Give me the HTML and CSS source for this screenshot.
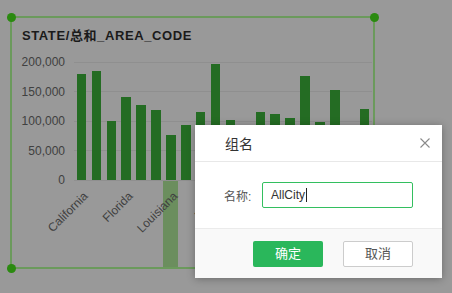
FILE: index.html
```html
<!DOCTYPE html>
<html>
<head>
    <title>Group Name</title>
    <meta charset="utf-8">
    <link rel="stylesheet" href="styles.css">
</head>
<body>
<div class="widget">
    <span class="handle tl"></span>
    <span class="handle tr"></span>
    <span class="handle bl"></span>
    <span class="handle br"></span>

    <div class="title">STATE/总和_AREA_CODE</div>

    <div class="chart">
        <div class="yaxis">
            <span>200,000</span>
            <span>150,000</span>
            <span>100,000</span>
            <span>50,000</span>
            <span>0</span>
        </div>
        <div class="plot">
            <div class="bars">
                <div class="band"><i class="bar" style="height:106px"></i></div>
                <div class="band"><i class="bar" style="height:109px"></i></div>
                <div class="band"><i class="bar" style="height:59px"></i></div>
                <div class="band"><i class="bar" style="height:83px"></i></div>
                <div class="band"><i class="bar" style="height:75px"></i></div>
                <div class="band"><i class="bar" style="height:70px"></i></div>
                <div class="band"><i class="bar" style="height:45px"></i></div>
                <div class="band"><i class="bar" style="height:55px"></i></div>
                <div class="band"><i class="bar" style="height:68px"></i></div>
                <div class="band"><i class="bar" style="height:116px"></i></div>
                <div class="band"><i class="bar" style="height:60px"></i></div>
                <div class="band"><i class="bar" style="height:40px"></i></div>
                <div class="band"><i class="bar" style="height:68px"></i></div>
                <div class="band"><i class="bar" style="height:66px"></i></div>
                <div class="band"><i class="bar" style="height:62px"></i></div>
                <div class="band"><i class="bar" style="height:104px"></i></div>
                <div class="band"><i class="bar" style="height:58px"></i></div>
                <div class="band"><i class="bar" style="height:90px"></i></div>
                <div class="band"><i class="bar" style="height:46px"></i></div>
                <div class="band"><i class="bar" style="height:71px"></i></div>
            </div>
            <div class="xaxis">
                <div class="band"><div class="tick"><span>California</span></div></div>
                <div class="band"></div>
                <div class="band"></div>
                <div class="band"><div class="tick"><span>Florida</span></div></div>
                <div class="band"></div>
                <div class="band"></div>
                <div class="band active"><div class="tick"><span>Louisiana</span></div></div>
                <div class="band"></div>
                <div class="band"></div>
                <div class="band"><div class="tick"><span>Maine</span></div></div>
                <div class="band"></div>
                <div class="band"></div>
                <div class="band"><div class="tick"><span>Ohio</span></div></div>
                <div class="band"></div>
                <div class="band"></div>
                <div class="band"><div class="tick"><span>Texas</span></div></div>
                <div class="band"></div>
                <div class="band"></div>
                <div class="band"><div class="tick"><span>Virginia</span></div></div>
                <div class="band"></div>
            </div>
        </div>
    </div>
</div>

<div class="dialog">
    <div class="dialog-head">
        <span class="dialog-title">组名</span>
        <svg class="close" width="10" height="10" viewBox="0 0 10 10">
            <path d="M0.5 0.5 L9.5 9.5 M9.5 0.5 L0.5 9.5" stroke="#8a8a8a" stroke-width="1.1" fill="none"/>
        </svg>
    </div>
    <div class="dialog-body">
        <label class="field-label">名称:</label>
        <div class="field">AllCity<span class="caret"></span></div>
    </div>
    <div class="dialog-foot">
        <a class="btn btn-ok">确定</a>
        <a class="btn btn-cancel">取消</a>
    </div>
</div>
</body>
</html>
```

FILE: styles.css
```css
body {
    margin: 0;
    width: 452px;
    height: 293px;
    overflow: hidden;
    position: relative;
    background: #999999;
    font-family: "Liberation Sans", "Noto Sans CJK SC", sans-serif;
}

.widget {
    position: relative;
    box-sizing: border-box;
    margin: 16px 0 0 10px;
    width: 365px;
    height: 253px;
    border: 2px solid #6b9a5c;
    display: flex;
    flex-direction: column;
}

.handle {
    position: absolute;
    width: 9px;
    height: 9px;
    border-radius: 50%;
    background: #2b8a10;
}

.handle.tl { left: -5px; top: -5px; }
.handle.tr { right: -6px; top: -5px; }
.handle.bl { left: -5px; bottom: -6px; }
.handle.br { right: -6px; bottom: -6px; }

.title {
    padding: 10px 0 0 10px;
    font-size: 13px;
    font-weight: bold;
    line-height: 16px;
    color: #1b1b1b;
    letter-spacing: 0.6px;
}

.chart {
    flex: 1;
    display: flex;
    align-items: flex-start;
    margin-top: 18px;
}

.yaxis {
    width: 53px;
    height: 130px;
    margin: -6px 9px 0 0;
    display: flex;
    flex-direction: column;
    justify-content: space-between;
    align-items: flex-end;
    font-size: 12px;
    line-height: 12px;
    color: #404040;
}

.plot {
    width: 298px;
    height: 100%;
    display: flex;
    flex-direction: column;
}

.bars {
    height: 118px;
    display: flex;
    border-bottom: 1px solid #8f8f8f;
    background: repeating-linear-gradient(to bottom, #8f8f8f 0, #8f8f8f 1px, transparent 1px, transparent 29.5px);
}

.band {
    flex: 1;
    min-width: 0;
}

.bars .band {
    display: flex;
    justify-content: center;
    align-items: flex-end;
}

.bar {
    width: 9.5px;
    background: #246c23;
}

.xaxis {
    flex: 1;
    display: flex;
}

.xaxis .band.active {
    background: #6b8e5e;
}

.tick {
    width: 0;
    margin-left: calc(50% + 4.5px);
    padding-top: 7px;
    display: flex;
    justify-content: flex-end;
}

.tick span {
    white-space: nowrap;
    font-size: 12px;
    line-height: 12px;
    color: #404040;
    transform-origin: right center;
    transform: rotate(-45deg);
}

/* dialog */

.dialog {
    position: absolute;
    left: 195px;
    top: 125px;
    width: 247px;
    height: 153px;
    background: #ffffff;
    box-shadow: 0 1px 8px rgba(0, 0, 0, 0.3);
    display: flex;
    flex-direction: column;
}

.dialog-head {
    height: 36px;
    border-bottom: 1px solid #e8e8e8;
    display: flex;
    align-items: center;
    justify-content: space-between;
    padding: 0 12px 0 30px;
}

.dialog-title {
    font-size: 14px;
    color: #333333;
}

.close {
    display: block;
}

.dialog-body {
    flex: 1;
    display: flex;
    align-items: center;
    padding: 0 29px;
    border-bottom: 1px solid #ebebeb;
}

.field-label {
    width: 38px;
    font-size: 12px;
    color: #555555;
}

.field {
    flex: 1;
    box-sizing: border-box;
    height: 26px;
    border: 1px solid #33bf5f;
    border-radius: 2px;
    padding-left: 8px;
    display: flex;
    align-items: center;
    font-size: 12px;
    color: #333333;
}

.caret {
    width: 1px;
    height: 14px;
    margin-left: 1px;
    background: #222222;
}

.dialog-foot {
    height: 49px;
    background: #f9f9f9;
    display: flex;
    justify-content: flex-end;
    align-items: center;
    gap: 20px;
    padding: 0 29px;
}

.btn {
    box-sizing: border-box;
    width: 70px;
    height: 26px;
    line-height: 24px;
    text-align: center;
    font-size: 13px;
    border-radius: 2px;
    border: 1px solid transparent;
}

.btn-ok {
    background: #2ab75b;
    color: #ffffff;
}

.btn-cancel {
    background: #ffffff;
    border-color: #cccccc;
    color: #555555;
}
```
